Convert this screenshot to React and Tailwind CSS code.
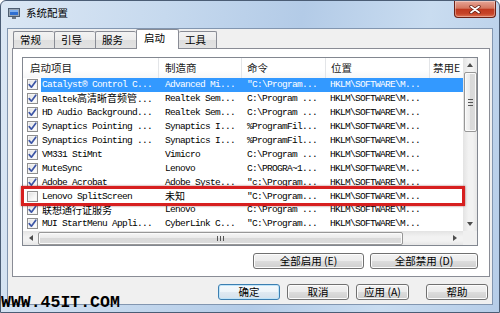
import React from "react";

const rows = [
  { c: true, sel: true, n: "Catalyst® Control C...", m: "Advanced Mi...", cmd: '"C:\\Program...', loc: "HKLM\\SOFTWARE\\M..." },
  { c: true, n: "Realtek高清晰音频管...", m: "Realtek Sem...", cmd: "C:\\Program ...", loc: "HKLM\\SOFTWARE\\M..." },
  { c: true, n: "HD Audio Background...", m: "Realtek Sem...", cmd: "C:\\Program ...", loc: "HKLM\\SOFTWARE\\M..." },
  { c: true, n: "Synaptics Pointing ...", m: "Synaptics I...", cmd: "%ProgramFil...", loc: "HKLM\\SOFTWARE\\M..." },
  { c: true, n: "Synaptics Pointing ...", m: "Synaptics I...", cmd: "%ProgramFil...", loc: "HKLM\\SOFTWARE\\M..." },
  { c: true, n: "VM331 StiMnt", m: "Vimicro", cmd: "C:\\Program ...", loc: "HKLM\\SOFTWARE\\M..." },
  { c: true, n: "MuteSync", m: "Lenovo", cmd: "C:\\PROGRA~1...", loc: "HKLM\\SOFTWARE\\M..." },
  { c: true, n: "Adobe Acrobat", m: "Adobe Syste...", cmd: '"c:\\Program...', loc: "HKLM\\SOFTWARE\\M..." },
  { c: false, n: "Lenovo SplitScreen", m: "未知", cmd: '"C:\\Program...', loc: "HKLM\\SOFTWARE\\M..." },
  { c: true, n: "联想通行证服务", m: "Lenovo", cmd: "C:\\Program ...", loc: "HKLM\\SOFTWARE\\M..." },
  { c: true, n: "MUI StartMenu Appli...", m: "CyberLink C...", cmd: '"C:\\Program...', loc: "HKLM\\SOFTWARE\\M..." },
];

function Mixed({ text }) {
  const parts = text.split(/([\u4e00-\u9fff]+)/).filter((p) => p !== "");
  return (
    <>
      {parts.map((p, i) =>
        /[\u4e00-\u9fff]/.test(p) ? (
          <span key={i} className="font-['Noto_Sans_CJK_SC',sans-serif] text-[10px] tracking-normal leading-[12px] whitespace-pre">
            {p}
          </span>
        ) : (
          <span key={i} className="leading-[11px] whitespace-pre">{p}</span>
        )
      )}
    </>
  );
}

function Check({ checked }) {
  return (
    <div className="w-[11px] h-[11px] border border-[#8f8f8f] bg-[linear-gradient(135deg,#dcdcdc,#f6f6f6_60%,#ffffff)] flex items-center justify-center shadow-[inset_0_0_0_1px_#f4f4f4]">
      {checked && (
        <svg width="9" height="9" viewBox="0 0 9 9">
          <path d="M1.2 4.6 L3.4 7.2 L7.8 1.2" fill="none" stroke="#3d56a6" strokeWidth="1.7" strokeLinecap="round" strokeLinejoin="round" />
        </svg>
      )}
    </div>
  );
}

function Btn({ children, className = "", def = false }) {
  return (
    <div
      className={
        "h-[16px] rounded-[3px] border flex items-center justify-center text-[10.5px] leading-none text-black font-['Noto_Sans_CJK_SC',sans-serif] " +
        (def
          ? "border-[#3c7fb1] bg-[linear-gradient(#f4f9fc,#edf4f9_50%,#e0eaf2_50%,#d4e1ec)] shadow-[inset_0_0_0_1px_#bfe4f9] "
          : "border-[#707070] bg-[linear-gradient(#f2f2f2,#ebebeb_50%,#dddddd_50%,#cfcfcf)] shadow-[inset_0_0_0_1px_#fcfcfc] ") +
        className
      }
    >
      {children}
    </div>
  );
}

export default function App() {
  return (
    <div className="relative w-[500px] h-[313px] overflow-hidden flex flex-col rounded-t-[6px] border border-[#4b5d75] bg-[linear-gradient(100deg,#dbe7f4_0%,#c6d9ee_30%,#b3cbe7_55%,#c9dcf0_78%,#b6cde8_100%)]">
      {/* title bar */}
      <div className="h-[27px] flex items-start">
        <div className="flex items-center pl-[7px] pt-[7px]">
          <svg width="12" height="11" viewBox="0 0 12 11">
            <rect x="0.5" y="0.5" width="11" height="8" fill="#9aa6b4" stroke="#4e5d70" />
            <rect x="2" y="2" width="8" height="5" fill="#2f6fd1" />
            <rect x="2" y="2" width="8" height="2" fill="#7fb0f0" />
            <rect x="4" y="9" width="4" height="2" fill="#6b7785" />
          </svg>
          <span className="ml-[6px] text-[10.5px] leading-none text-black font-['Noto_Sans_CJK_SC',sans-serif]">系统配置</span>
        </div>
        <div className="ml-auto mr-[3px] w-[42px] h-[17px] rounded-b-[4px] border border-t-0 border-[#6b2116] bg-[linear-gradient(#e6a697,#d4765f_45%,#c0391f_52%,#c64529_80%,#e07455)] shadow-[inset_0_0_0_1px_rgba(255,255,255,0.35)] flex items-center justify-center">
          <svg width="12" height="9" viewBox="0 0 12 9">
            <path d="M2 1.5 L10 7.5 M10 1.5 L2 7.5" stroke="#5a1a10" strokeWidth="3.2" strokeLinecap="round" />
            <path d="M2 1.5 L10 7.5 M10 1.5 L2 7.5" stroke="#ffffff" strokeWidth="1.8" strokeLinecap="round" />
          </svg>
        </div>
      </div>

      {/* body */}
      <div className="flex-1 mx-[6px] mb-[7px] border border-[#8296b0] bg-[#f0f0f0] flex flex-col font-['Noto_Sans_CJK_SC',sans-serif]">
        {/* tabs */}
        <div className="h-[19px] pl-[5px] flex items-end">
          {[
            ["常规", "w-[41px]"],
            ["引导", "w-[41px]"],
            ["服务", "w-[41px]"],
          ].map(([t, w]) => (
            <div
              key={t}
              className={w + " h-[17px] border border-b-0 border-r-0 border-[#898c95] rounded-t-[2px] bg-[linear-gradient(#f3f3f3,#ebebeb_50%,#dedede_50%,#e3e3e3)] text-[10.5px] leading-none text-black flex items-center pl-[6px]"}
            >
              {t}
            </div>
          ))}
          <div className="relative z-10 -mb-[1px] w-[43px] h-[20px] border border-b-0 border-[#898c95] rounded-t-[2px] bg-white text-[10.5px] leading-none text-black flex items-center pl-[7px] pb-[2px]">
            启动
          </div>
          <div className="w-[38px] h-[17px] border border-b-0 border-l-0 border-[#898c95] rounded-t-[2px] bg-[linear-gradient(#f3f3f3,#ebebeb_50%,#dedede_50%,#e3e3e3)] text-[10.5px] leading-none text-black flex items-center pl-[6px]">
            工具
          </div>
        </div>

        {/* panel */}
        <div className="ml-[4px] mr-[2px] h-[229px] border border-[#898c95] bg-white pl-[9px] pr-[11px] pt-[8px] pb-[7px] flex flex-col">
          {/* list view */}
          <div className="h-[189px] border border-[#828790] bg-white flex">
            <div className="w-[440px] flex flex-col">
              {/* header */}
              <div className="h-[20px] flex bg-[linear-gradient(#ffffff,#ffffff_60%,#f6f7f8)] text-[10.5px] leading-none text-[#1a1a1a]">
                <div className="w-[136px] border-r border-[#e3e5e8] flex items-center pl-[7px]">启动项目</div>
                <div className="w-[83px] border-r border-[#e3e5e8] flex items-center pl-[6px]">制造商</div>
                <div className="w-[84px] border-r border-[#e3e5e8] flex items-center pl-[5px]">命令</div>
                <div className="w-[104px] border-r border-[#e3e5e8] flex items-center pl-[5px]">位置</div>
                <div className="flex-1 flex items-center pl-[3px] overflow-hidden whitespace-nowrap">禁用E</div>
              </div>
              {/* rows */}
              <div className="flex-1 flex flex-col overflow-hidden">
                {rows.map((r, i) => (
                  <div key={i} className="h-[13.9px] shrink-0 flex items-center font-['Liberation_Mono','Noto_Sans_CJK_SC',monospace] text-[9.5px] tracking-[-0.7px] leading-[11px] whitespace-nowrap">
                    <div className="w-[18px] h-full flex items-center pl-[4px]">
                      <Check checked={r.c} />
                    </div>
                    <div className={"flex-1 h-full flex items-center " + (r.sel ? "bg-[#3399ff] text-white" : "text-black")}>
                      <div className="w-[118px] pl-[1px] flex items-baseline">
                        <Mixed text={r.n} />
                      </div>
                      <div className="w-[83px] pl-[6px] flex items-baseline">
                        <Mixed text={r.m} />
                      </div>
                      <div className="w-[84px] pl-[5px] flex items-baseline">
                        <span className="leading-[11px] whitespace-pre">{r.cmd}</span>
                      </div>
                      <div className="w-[104px] pl-[4px] flex items-baseline">
                        <span className="leading-[11px] whitespace-pre">{r.loc}</span>
                      </div>
                      <div className="flex-1" />
                    </div>
                  </div>
                ))}
              </div>
              {/* horizontal scrollbar */}
              <div className="h-[14px] bg-[linear-gradient(#e3e3e3,#f2f2f2_40%,#f2f2f2_70%,#e6e6e6)] flex items-center">
                <div className="w-[15px] h-full flex items-center justify-center">
                  <svg width="4" height="6" viewBox="0 0 4 6"><path d="M4 0 L0 3 L4 6 Z" fill="#4d4d4d" /></svg>
                </div>
                <div className="w-[365px] h-[13px] rounded-[2px] border border-[#979797] bg-[linear-gradient(#f6f6f6,#e9e9e9_50%,#d9d9d9_50%,#dcdcdc)] shadow-[inset_0_0_0_1px_#fbfbfb] flex items-center justify-center">
                  <div className="flex gap-[2px]">
                    <div className="w-[1px] h-[5px] bg-[#555]" />
                    <div className="w-[1px] h-[5px] bg-[#555]" />
                    <div className="w-[1px] h-[5px] bg-[#555]" />
                  </div>
                </div>
                <div className="flex-1 h-full flex items-center justify-end pr-[6px]">
                  <svg width="4" height="6" viewBox="0 0 4 6"><path d="M0 0 L4 3 L0 6 Z" fill="#4d4d4d" /></svg>
                </div>
              </div>
            </div>
            {/* vertical scrollbar */}
            <div className="flex-1 flex flex-col">
              <div className="flex-1 flex flex-col bg-[linear-gradient(90deg,#e3e3e3,#f2f2f2_40%,#f2f2f2_70%,#e6e6e6)]">
                <div className="h-[14px] flex items-center justify-center">
                  <svg width="6" height="4" viewBox="0 0 6 4"><path d="M0 4 L3 0 L6 4 Z" fill="#4d4d4d" /></svg>
                </div>
                <div className="h-[60px] mx-auto w-[13px] rounded-[2px] border border-[#979797] bg-[linear-gradient(90deg,#f6f6f6,#e9e9e9_50%,#d9d9d9_50%,#dcdcdc)] shadow-[inset_0_0_0_1px_#fbfbfb] flex items-center justify-center">
                  <div className="flex flex-col gap-[2px]">
                    <div className="w-[5px] h-[1px] bg-[#555]" />
                    <div className="w-[5px] h-[1px] bg-[#555]" />
                    <div className="w-[5px] h-[1px] bg-[#555]" />
                  </div>
                </div>
                <div className="flex-1" />
                <div className="h-[14px] flex items-center justify-center">
                  <svg width="6" height="4" viewBox="0 0 6 4"><path d="M0 0 L3 4 L6 0 Z" fill="#4d4d4d" /></svg>
                </div>
              </div>
              <div className="h-[14px] bg-[#f0f0f0]" />
            </div>
          </div>

          {/* enable / disable buttons */}
          <div className="mt-[7px] flex justify-end gap-[6px]">
            <Btn className="w-[111px]">全部启用 (E)</Btn>
            <Btn className="w-[108px]">全部禁用 (D)</Btn>
          </div>
        </div>

        {/* dialog buttons */}
        <div className="mt-[7px] pr-[4px] flex justify-end">
          <Btn def className="w-[62px]">确定</Btn>
          <Btn className="w-[62px] ml-[7px]">取消</Btn>
          <Btn className="w-[53px] ml-[7px]">应用 (A)</Btn>
          <Btn className="w-[62px] ml-[17px]">帮助</Btn>
        </div>
      </div>

      {/* red highlight */}
      <div className="absolute left-[20px] top-[185px] w-[444px] h-[20px] border-[3px] border-[#d71f1f] shadow-[0_0_2px_rgba(120,0,0,0.6)] pointer-events-none" />

      {/* watermark */}
      <div className="absolute left-0 bottom-[1px] font-['Liberation_Mono',monospace] font-bold text-[16.5px] leading-none text-black">
        WWW.45IT.COM
      </div>
    </div>
  );
}
